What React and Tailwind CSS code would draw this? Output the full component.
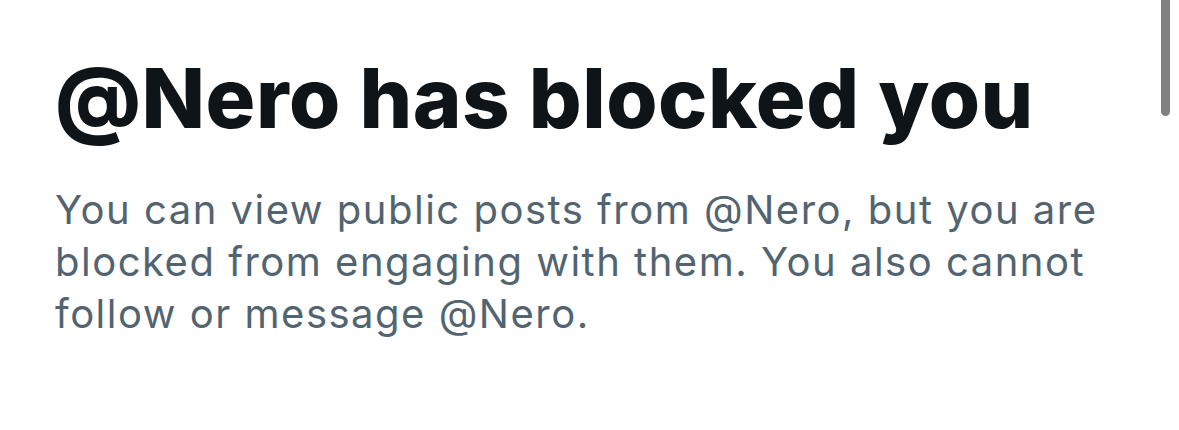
export default function App() {
  return (
    <div className="relative w-[1179px] h-[430px] bg-white overflow-hidden" style={{ fontFamily: 'Inter, "Noto Sans", sans-serif' }}>
      <div className="pl-[55px] pt-[50px]">
        <h1 className="text-[83px] leading-[96px] font-extrabold text-[#0f1419] tracking-[0.5px]">@Nero has blocked you</h1>
        <p className="mt-[38px] text-[40px] leading-[52px] text-[#536471] tracking-[1.5px] w-[1100px]">
          You can view public posts from @Nero, but you are blocked from engaging with them. You also cannot follow or message @Nero.
        </p>
      </div>
      <div className="absolute right-[9px] top-0 w-[9px] h-[116px] rounded-b-full bg-[#808080]"></div>
    </div>
  );
}
